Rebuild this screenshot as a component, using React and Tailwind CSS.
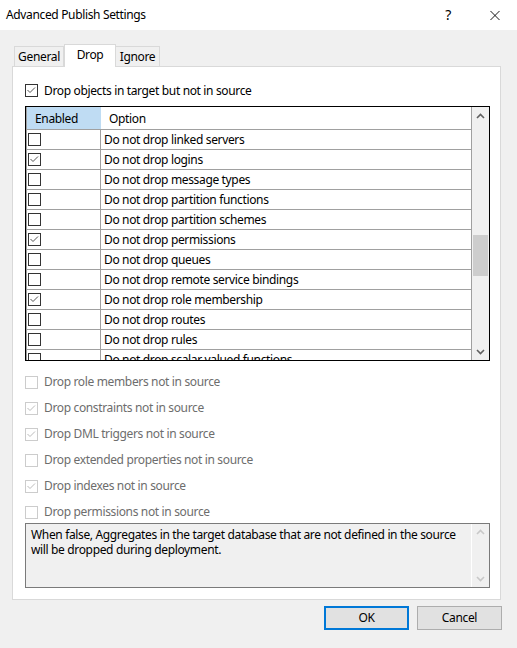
import React from "react";

const rows = [
  ["Do not drop linked servers", false],
  ["Do not drop logins", true],
  ["Do not drop message types", false],
  ["Do not drop partition functions", false],
  ["Do not drop partition schemes", false],
  ["Do not drop permissions", true],
  ["Do not drop queues", false],
  ["Do not drop remote service bindings", false],
  ["Do not drop role membership", true],
  ["Do not drop routes", false],
  ["Do not drop rules", false],
  ["Do not drop scalar valued functions", false],
];

const options = [
  ["Drop role members not in source", false],
  ["Drop constraints not in source", true],
  ["Drop DML triggers not in source", true],
  ["Drop extended properties not in source", false],
  ["Drop indexes not in source", true],
  ["Drop permissions not in source", false],
];

function Check({ checked, disabled }) {
  return (
    <span
      className={
        "flex h-[13px] w-[13px] shrink-0 items-center justify-center border " +
        (disabled ? "border-[#cccccc] bg-white" : "border-[#333333] bg-white")
      }
    >
      {checked && (
        <svg width="11" height="11" viewBox="0 0 11 11">
          <polyline
            points="1.5,5 4,7.5 9,2.5"
            fill="none"
            stroke={disabled ? "#bcbcbc" : "#555555"}
            strokeWidth="1"
          />
        </svg>
      )}
    </span>
  );
}

function Chevron({ up, color = "#606060" }) {
  return (
    <svg width="9" height="6" viewBox="0 0 9 6">
      <polyline
        points={up ? "1,5 4.5,1.5 8,5" : "1,1 4.5,4.5 8,1"}
        fill="none"
        stroke={color}
        strokeWidth="1.6"
      />
    </svg>
  );
}

export default function App() {
  return (
    <div className="flex h-[648px] w-[517px] flex-col bg-[#f0f0f0] font-['Noto_Sans',sans-serif] text-[12px] tracking-[-0.35px] text-black">
      {/* title bar */}
      <div className="flex h-[30px] shrink-0 items-center bg-white pl-[6px]">
        <span className="leading-none">Advanced Publish Settings</span>
        <span className="ml-auto w-[12px] text-center text-[14px] leading-none">?</span>
        <span className="ml-[36px] mr-[17px] flex h-[10px] w-[10px] items-center">
          <svg width="11" height="11" viewBox="0 0 11 11">
            <path d="M0.5 0.5 L10.5 10.5 M10.5 0.5 L0.5 10.5" stroke="#000" strokeWidth="1" />
          </svg>
        </span>
      </div>

      <div className="pl-[12px] pt-[14px]">
        {/* tabs */}
        <div className="flex h-[22px] items-end pl-[2px]">
          <div className="flex h-[20px] w-[50px] items-center justify-center border border-b-0 border-[#d9d9d9] bg-[#f0f0f0] pt-[1px]">
            General
          </div>
          <div className="relative z-10 -mb-px flex h-[23px] w-[52px] items-start justify-center border border-b-0 border-[#d9d9d9] bg-white pt-[1px]">
            Drop
          </div>
          <div className="flex h-[20px] w-[44px] items-center justify-center border border-b-0 border-l-0 border-[#d9d9d9] bg-[#f0f0f0] pt-[1px]">
            Ignore
          </div>
        </div>

        {/* panel */}
        <div className="flex h-[534px] w-[489px] flex-col border border-[#d9d9d9] bg-white pl-[12px]">
          <div className="mt-[15px] flex h-[16px] items-center gap-[6px]">
            <Check checked />
            <span className="pt-[1px]">Drop objects in target but not in source</span>
          </div>

          {/* grid */}
          <div className="mt-[8px] flex h-[255px] w-[465px] border border-black">
            <div className="flex w-[446px] flex-col overflow-hidden border-l border-r border-[#a0a0a0]">
              <div className="flex h-[23px] shrink-0 border-b border-[#a0a0a0]">
                <div className="flex w-[74px] items-center bg-[#bfdcf3] pl-[8px] pt-[2px]">Enabled</div>
                <div className="flex flex-1 items-center border-l border-white pl-[7px] pt-[2px]">Option</div>
              </div>
              {rows.map(([label, on]) => (
                <div key={label} className="flex h-[20px] shrink-0 border-b border-[#a0a0a0]">
                  <div className="flex w-[74px] items-center border-r border-[#a0a0a0] pl-[1px]">
                    <Check checked={on} />
                  </div>
                  <div className="flex flex-1 items-center whitespace-nowrap pl-[3px]">{label}</div>
                </div>
              ))}
            </div>
            <div className="flex w-[17px] flex-col items-center bg-[#f0f0f0]">
              <div className="flex h-[17px] items-center justify-center">
                <Chevron up />
              </div>
              <div className="mt-[111px] h-[41px] w-[15px] bg-[#cdcdcd]" />
              <div className="mt-auto flex h-[17px] items-center justify-center">
                <Chevron />
              </div>
            </div>
          </div>

          {/* disabled options */}
          <div className="mt-[13px] flex flex-col gap-[10px]">
            {options.map(([label, on]) => (
              <div key={label} className="flex h-[16px] items-center gap-[6px] text-[#6d6d6d]">
                <Check checked={on} disabled />
                <span className="-mt-[1px]">{label}</span>
              </div>
            ))}
          </div>

          {/* description */}
          <div className="mt-[3px] flex h-[65px] w-[465px] border border-[#7a7a7a] bg-[#f0f0f0]">
            <div className="flex-1 whitespace-nowrap border-r border-white pl-[5px] pt-[3px] leading-[15px]">
              When false, Aggregates in the target database that are not defined in the source
              <br />
              will be dropped during deployment.
            </div>
            <div className="flex w-[17px] flex-col items-center justify-between py-[5px]">
              <Chevron up color="#c8c8c8" />
              <Chevron color="#c8c8c8" />
            </div>
          </div>
        </div>
      </div>

      {/* buttons */}
      <div className="mt-[6px] flex justify-end gap-[8px] pr-[15px]">
        <button className="flex h-[24px] w-[85px] items-center justify-center border-2 border-[#0078d7] bg-[#e1e1e1]">
          OK
        </button>
        <button className="flex h-[24px] w-[85px] items-center justify-center border border-[#adadad] bg-[#e1e1e1]">
          Cancel
        </button>
      </div>
    </div>
  );
}
